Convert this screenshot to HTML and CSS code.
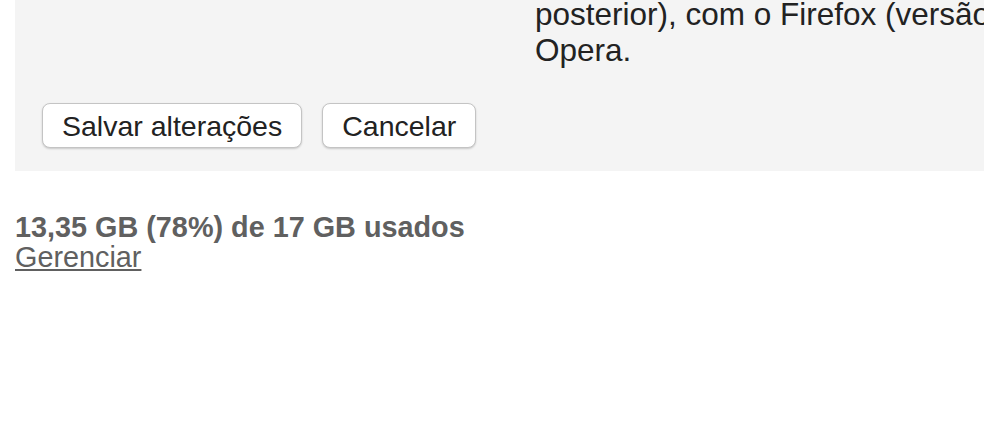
FILE: index.html
```html
<!DOCTYPE html>
<html lang="pt-BR">
<head>
  <meta charset="UTF-8">
  <meta name="viewport" content="width=device-width, initial-scale=1.0">
  <title>Configurações</title>
  <link rel="stylesheet" href="styles.css">
</head>
<body>
  <div class="page">
    <div class="settings-panel">
      <div class="setting-row">
        <div class="setting-label"></div>
        <div class="setting-desc">
          posterior), com o Firefox (versão 3.0 ou posterior) e com o<br>
          Opera.
        </div>
      </div>
      <div class="actions">
        <button class="btn">Salvar alterações</button>
        <button class="btn">Cancelar</button>
      </div>
    </div>

    <div class="storage">
      <div class="storage-used">13,35 GB (78%) de 17 GB usados</div>
      <a href="#" class="storage-link">Gerenciar</a>
    </div>
  </div>
</body>
</html>
```

FILE: styles.css
```css
html, body {
  margin: 0;
  overflow: hidden;
  background: #fff;
}
body {
  font-family: "Liberation Sans", Arial, sans-serif;
  font-size: 28.5px;
  color: #222;
}
.page {
  padding-left: 15px;
}
.settings-panel {
  background: #f4f4f4;
  padding: 0 0 23px 27px;
}
.setting-row {
  display: flex;
  margin-top: -4px;
}
.setting-label {
  width: 493px;
  flex-shrink: 0;
}
.setting-desc {
  font-size: 31.5px;
  line-height: 36px;
  white-space: nowrap;
}
.actions {
  display: flex;
  gap: 20px;
  margin-top: 35px;
}
.btn {
  font-family: inherit;
  font-size: 28.5px;
  line-height: 32px;
  color: #222;
  background: #fff;
  border: 1px solid #c4c4c4;
  border-radius: 8px;
  padding: 6px 19px 5px;
  box-shadow: 0 1px 2px rgba(0,0,0,0.18);
  cursor: pointer;
}
.storage {
  margin-top: 41px;
  font-size: 28.8px;
  line-height: 30px;
  color: #606060;
}
.storage-used {
  font-weight: bold;
}
.storage-link {
  color: #606060;
  text-decoration: underline;
}
```
